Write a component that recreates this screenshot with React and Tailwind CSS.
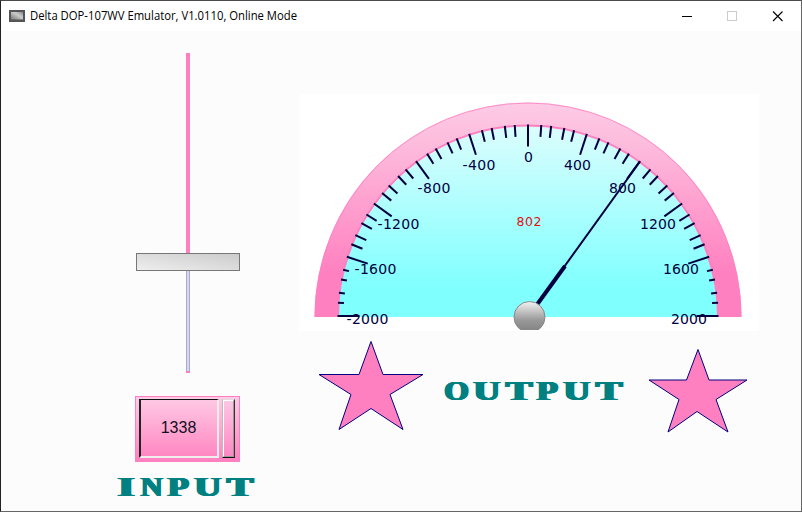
import React from "react";

const CX = 528;
const CY = 317;

const LABELS = [
  ["-2000", 346.5, 324, 42],
  ["-1600", 354.5, 274, 42],
  ["-1200", 377.5, 229, 42],
  ["-800", 417.5, 193, 33],
  ["-400", 462.5, 170, 33],
  ["0", 524, 162, 9],
  ["400", 564, 170, 27],
  ["800", 609, 193, 27],
  ["1200", 640, 229, 36],
  ["1600", 663, 274, 36],
  ["2000", 671, 324, 36],
];

function Ticks() {
  const ticks = [];
  for (let i = -25; i <= 25; i++) {
    // tick angles snap to whole degrees either side of the zero mark
    const deg = Math.sign(i) * Math.round(Math.abs(i) * 3.6);
    const a = ((90 - deg) * Math.PI) / 180;
    const major = i % 5 === 0;
    const low = Math.abs(i) > 20;
    const len = major ? 22 : low ? 6 : 12;
    const c = Math.cos(a);
    const s = Math.sin(a);
    ticks.push(
      <line
        key={i}
        x1={CX + 190.5 * c}
        y1={CY - 1 - 191.5 * s}
        x2={CX + (190.5 - len) * c}
        y2={CY - 1 - (191.5 - len) * s}
      />
    );
  }
  return (
    <g stroke="#000040" strokeWidth="2">
      {ticks}
    </g>
  );
}

function Gauge() {
  return (
    <svg className="block bg-white" width="460" height="237" viewBox="299 94 460 237">
      <defs>
        <linearGradient id="rim" x1="0" y1="0" x2="0" y2="1">
          <stop offset="0" stopColor="#fdcbe5" />
          <stop offset="0.2" stopColor="#fdbbdc" />
          <stop offset="0.8" stopColor="#ff80c0" />
          <stop offset="1" stopColor="#ff80c0" />
        </linearGradient>
        <linearGradient id="dial" x1="0" y1="0" x2="0" y2="1">
          <stop offset="0" stopColor="#dcfdfd" />
          <stop offset="0.85" stopColor="#80ffff" />
          <stop offset="1" stopColor="#80ffff" />
        </linearGradient>
        <linearGradient id="hub" x1="0" y1="0" x2="0" y2="1">
          <stop offset="0" stopColor="#f4f4f4" />
          <stop offset="0.6" stopColor="#999999" />
          <stop offset="1" stopColor="#808080" />
        </linearGradient>
        <clipPath id="hubClip">
          <rect x="510" y="295" width="40" height="35" />
        </clipPath>
      </defs>
      <path d="M314.5 317A213.5 214.5 0 0 1 741.5 317Z" fill="url(#rim)" />
      <path d="M315 317A213 214 0 0 1 741 317" fill="none" stroke="#ff80c0" strokeWidth="1" strokeOpacity="0.8" />
      <path d="M338 317A190 191.5 0 0 1 718 317Z" fill="url(#dial)" />
      <path d="M338 317A190 191.5 0 0 1 718 317" fill="none" stroke="#ff80c0" strokeWidth="2" />
      <Ticks />
      <g fill="#000040" fontFamily="Verdana, 'DejaVu Sans', sans-serif" fontSize="14">
        {LABELS.map(([t, x, y, w]) => (
          <text key={t} x={x} y={y} textLength={w}>
            {t}
          </text>
        ))}
      </g>
      <text x="516.5" y="226" fontSize="12.5" textLength="25" fill="#e01010" fontFamily="Verdana, 'DejaVu Sans', sans-serif">
        802
      </text>
      <path d="M528 317L640 161.500" stroke="#000040" strokeWidth="2" />
      <path d="M528 317L565 266" stroke="#000040" strokeWidth="4" />
      <g clipPath="url(#hubClip)">
        <circle cx="529.5" cy="317" r="15.5" fill="url(#hub)" stroke="#888888" />
      </g>
    </svg>
  );
}

// Box width and horizontal stretch of each letter in the extra-wide lettering
const LETTER = {
  I: ["w-[19px]", "scale-x-[1.62]"],
  N: ["w-[24px]", "scale-x-[1.13]"],
  P: ["w-[23px]", "scale-x-[1.3]"],
  U: ["w-[29px]", "scale-x-[1.38]"],
  T: ["w-[28px]", "scale-x-[1.48]"],
  O: ["w-[25px]", "scale-x-[1.17]"],
};

function WideWord({ word, className }) {
  return (
    <div
      className={`flex h-[22px] font-['Liberation_Serif',serif] text-[27px] font-bold leading-[22px] text-[#008080] [text-shadow:1px_0_#008080,-1px_0_#008080,0.5px_0_#008080,-0.5px_0_#008080] ${className}`}
    >
      {word.split("").map((ch, i) => (
        <span key={i} className={`flex shrink-0 justify-center ${LETTER[ch][0]}`}>
          <span className={`inline-block ${LETTER[ch][1]}`}>{ch}</span>
        </span>
      ))}
    </div>
  );
}

function Star({ points, width, height, className }) {
  return (
    <svg className={className} width={width} height={height}>
      <polygon points={points} fill="#ff80c0" stroke="#000080" strokeWidth="1" />
    </svg>
  );
}

function TitleBar() {
  return (
    <header className="flex h-[30px] items-center bg-white">
      <svg className="ml-2 shrink-0" width="16" height="12">
        <defs>
          <linearGradient id="screen" x1="0" y1="1" x2="1" y2="0">
            <stop offset="0" stopColor="#777777" />
            <stop offset="0.6" stopColor="#cccccc" />
            <stop offset="1" stopColor="#888888" />
          </linearGradient>
        </defs>
        <rect width="16" height="12" fill="#555555" />
        <rect x="2" y="2" width="12" height="7.500" fill="url(#screen)" />
      </svg>
      <svg className="ml-[5px] overflow-visible" width="272" height="20">
        <text x="0" y="14" fontSize="12" fill="#000" textLength="267" lengthAdjust="spacingAndGlyphs" fontFamily="'Segoe UI', 'Open Sans', sans-serif">
          Delta DOP-107WV Emulator, V1.0110, Online Mode
        </text>
      </svg>
      <svg className="ml-auto mr-[17px] mt-[-1px]" width="102" height="12" fill="none">
        <path d="M0 6.500H10" stroke="#000" />
        <rect x="45.500" y="1.500" width="9" height="9" stroke="#cccccc" />
        <path d="M91 1.500L100.500 11M100.500 1.500L91 11" stroke="#000" strokeWidth="1.100" />
      </svg>
    </header>
  );
}

export default function App() {
  return (
    <div className="h-[512px] w-[802px] overflow-hidden border border-[#666666] border-l-[#222222] border-t-[#4a4a4a] bg-[#fcfcfc]">
      <TitleBar />
      <main className="flex">
        <section className="ml-[114px] flex w-[144px] flex-col pt-[22px]">
          <div className="ml-[21px] flex w-[104px] flex-col items-center">
            <div className="h-[200px] w-1 bg-[#ff80c0]" />
            <div className="h-[18px] w-[104px] border border-[#777777] bg-linear-to-tr from-[#eeeeee] to-[#cccccc]" />
            <div className="h-[102px] w-1 border-x border-b-2 border-[#ff80c0] bg-[#80ffff]" />
          </div>
          <div className="ml-5 mt-[23px] flex h-[66px] w-[105px] gap-[3px] border border-[#ff80c0] bg-linear-to-b from-[#fdcbe5] to-[#ff80c0] py-[2px] pl-[3px]">
            <div className="flex h-[59px] w-[80px] items-center justify-center border-b-2 border-l-2 border-r-2 border-t border-b-[#eeeeee] border-l-[#222222] border-r-[#eeeeee] border-t-[#111111] pr-[1px] font-['Arial','Liberation_Sans',sans-serif] text-[16px] leading-none text-[#101020]">
              1338
            </div>
            <div className="h-[59px] w-[13px] border border-b-[#111111] border-l-[#bbbbbb] border-r-[#333333] border-t-[#dddddd]">
              <div className="h-full border border-b-[#999999] border-l-white border-r-[#999999] border-t-white" />
            </div>
          </div>
          <WideWord word="INPUT" className="ml-[2px] mt-[14px] gap-[3.5px]" />
        </section>
        <section className="ml-[40px] w-[460px] pt-[63px]">
          <Gauge />
          <div className="flex items-start">
            <Star
              className="ml-[18px] mt-[8px]"
              width={108}
              height={94}
              points="54,2.500 66,35.500 106,35.500 73,55.500 86,90.500 54,69.500 22,90.500 34,55.500 2,35.500 42,35.500"
            />
            <WideWord word="OUTPUT" className="ml-[19px] mt-[49px] w-[182px] gap-[3.4px]" />
            <Star
              className="ml-[21px] mt-[17px]"
              width={104}
              height={90}
              points="51,1.500 62,32 100,32 69,51.500 81,84 50,63.500 21,84 32,51.500 2,32 39.500,32"
            />
          </div>
        </section>
      </main>
    </div>
  );
}
